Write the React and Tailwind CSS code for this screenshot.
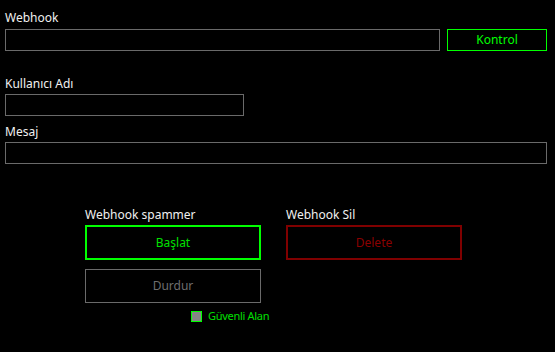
export default function App() {
  const font = { fontFamily: '"Noto Sans", "Open Sans", sans-serif' };
  return (
    <div className="w-[555px] h-[352px] bg-black overflow-hidden text-[12px] leading-[16px] text-[#f0f0f0]" style={font}>
      <div className="pl-[5px] pt-[10px] flex flex-col">
        <div className="h-[16px]">Webhook</div>
        <div className="mt-[3px] flex gap-[7px]">
          <div className="w-[435px] h-[22px] border border-[#6a6a6a] bg-black" />
          <button className="w-[100px] h-[22px] border border-[#00ff00] text-[#00ff00] bg-black flex items-center justify-center">Kontrol</button>
        </div>
        <div className="mt-[25px] h-[16px]">Kullanıcı Adı</div>
        <div className="mt-[2px] w-[239px] h-[22px] border border-[#6a6a6a]" />
        <div className="mt-[8px] h-[16px]">Mesaj</div>
        <div className="mt-[2px] w-[542px] h-[22px] border border-[#6a6a6a]" />
        <div className="mt-[43px] pl-[80px] flex gap-[25px]">
          <div className="flex flex-col w-[176px]">
            <div className="h-[16px]">Webhook spammer</div>
            <button className="mt-[2px] h-[35px] border-2 border-[#00ff00] text-[#00e000] flex items-center justify-center">Başlat</button>
            <button className="mt-[9px] h-[34px] border border-[#6a6a6a] text-[#6e6e6e] flex items-center justify-center">Durdur</button>
            <div className="mt-[5px] flex items-center pl-[106px] gap-[6px] whitespace-nowrap">
              <div className="shrink-0 w-[11px] h-[11px] border border-solid border-[#00ff00] bg-[#858585]" />
              <span className="text-[#00e000] text-[11px] tracking-[-0.3px]">Güvenli Alan</span>
            </div>
          </div>
          <div className="flex flex-col w-[176px]">
            <div className="h-[16px]">Webhook Sil</div>
            <button className="mt-[2px] h-[35px] border-2 border-[#800000] text-[#8b0000] flex items-center justify-center">Delete</button>
          </div>
        </div>
      </div>
    </div>
  );
}
